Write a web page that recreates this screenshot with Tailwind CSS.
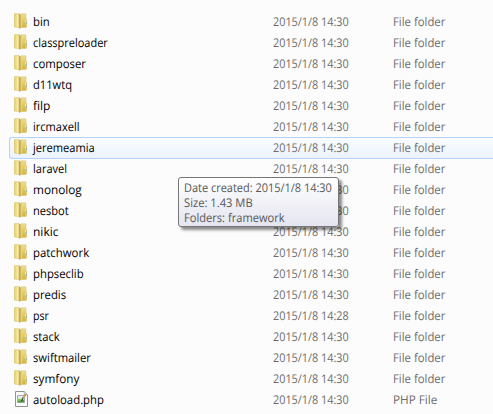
<!DOCTYPE html>
<html lang="en">
<head>
<meta charset="utf-8">
<title>vendor</title>
<script src="https://cdn.jsdelivr.net/npm/@tailwindcss/browser@4"></script>
</head>
<body class="bg-[#fcfcfc] w-[493px] h-[414px] overflow-hidden relative font-['Open_Sans','Noto_Sans',sans-serif] text-[12px] leading-[20px] text-[#6d6d6d] [text-rendering:geometricPrecision]">
<svg class="absolute w-0 h-0">
  <defs>
    <linearGradient id="cover" x1="0" x2="1" y1="0" y2="0"><stop offset="0" stop-color="#dfca6c"/><stop offset=".35" stop-color="#ecdc88"/><stop offset=".75" stop-color="#f6eca8"/><stop offset="1" stop-color="#e6d078"/></linearGradient>
    <linearGradient id="back" x1="0" x2="0" y1="0" y2="1"><stop offset="0" stop-color="#eedf92"/><stop offset=".4" stop-color="#e5cd6c"/><stop offset="1" stop-color="#d3b23f"/></linearGradient>
    <linearGradient id="spine" x1="0" x2="1" y1="0" y2="0"><stop offset="0" stop-color="#bfa24d"/><stop offset="1" stop-color="#dcc572"/></linearGradient>
    <symbol id="folder" viewBox="0 0 16 16">
      <path d="M7 .8h5v13.7H7z" fill="url(#back)" stroke="#dbc468" stroke-width=".5"/>
      <path d="M11 6h1.8v8.3H11z" fill="#dac263"/>
      <path d="M11.2 6.6h.8v3h-.8z" fill="#f7eebb"/>
      <path d="M12 8.7h.8v2.2H12z" fill="#79b3c0"/>
      <path d="M.2 1L1 .4h4.2v14.3L.2 14z" fill="url(#cover)" stroke="#d6c068" stroke-width=".5"/>
      <path d="M5 .8l2.6.9v13L5 15.8z" fill="url(#spine)"/>
      <path d="M7.5 1.8h.6v12.3l-.6.4z" fill="#eedf96"/>
    </symbol>
    <symbol id="file" viewBox="0 0 16 16">
      <path d="M1.5.5h8.7l3.3 3.3v11.7h-12z" fill="#fbfbfb" stroke="#929292"/>
      <path d="M10.2.7v3.1h3.1" fill="#e4e4e4" stroke="#a8a8a8" stroke-width=".8"/>
      <path d="M3.5 4.5h7v7h-7z" fill="#e3edf0" stroke="#8c979b" stroke-width=".8"/>
      <path d="M4 8.7h6v2.5H4z" fill="#5b963d"/>
      <path d="M4 7.8h3v2H4z" fill="#8fca53"/>
      <path d="M7.2 10.2l2.2-4" stroke="#3c4631" stroke-width="1.3"/>
      <path d="M9.2 6.6l2-2.4" stroke="#e0a02e" stroke-width="1.6"/>
      <path d="M11 4.4l.8-.9" stroke="#c9452f" stroke-width="1.4"/>
    </symbol>
  </defs>
</svg>
<main id="list" class="pt-[11px] pl-[9px]"></main>
<div class="absolute left-[178px] top-[177px] w-[161px] h-[50px] rounded-[3px] border border-[#767676] bg-linear-to-b from-white to-[#e4e5f0] shadow-[3px_3px_3px_rgba(0,0,0,0.45)] pl-[5px] pt-[2px] leading-[15px] text-[#575757]">
  <div class="h-[15px]"><span data-w="148" class="inline-block origin-left whitespace-pre">Date created: 2015/1/8 14:30</span></div>
  <div class="h-[15px]"><span data-w="69" class="inline-block origin-left whitespace-pre">Size: 1.43 MB</span></div>
  <div class="h-[15px]"><span data-w="101" class="inline-block origin-left whitespace-pre">Folders: framework</span></div>
</div>
<script>
  const rows = [
    ['bin', 17], ['classpreloader', 75], ['composer', 53], ['d11wtq', 39], ['filp', 17],
    ['ircmaxell', 47], ['jeremeamia', 62], ['laravel', 34], ['monolog', 49], ['nesbot', 36],
    ['nikic', 25], ['patchwork', 56], ['phpseclib', 51], ['predis', 33], ['psr', 16],
    ['stack', 27], ['swiftmailer', 58], ['symfony', 46], ['autoload.php', 71]
  ];
  document.getElementById('list').innerHTML = rows.map(([name, w], i) => {
    const php = name.endsWith('.php');
    const state = i === 6
      ? 'border-[#b3d3f9] bg-linear-to-b from-[#fafcfe] to-[#ebf3fd]'
      : 'border-transparent';
    return `<div class="flex h-[21px] ${i === 6 ? 'relative' : ''}">
      <div class="flex w-full h-[22px] shrink-0 border border-r-0 rounded-l-[3px] ${state}">
        <svg class="w-4 h-4 ml-1 mt-[1px] shrink-0"><use href="#${php ? 'file' : 'folder'}"/></svg>
        <div class="w-[243px] pl-[3px] shrink-0 text-black"><span data-w="${w}" class="inline-block origin-left whitespace-pre">${name}</span></div>
        <div class="w-[120px] shrink-0"><span data-w="76" class="inline-block origin-left whitespace-pre">2015/1/8 14:${name === 'psr' ? '28' : '30'}</span></div>
        <div class="shrink-0"><span data-w="${php ? 44 : 52}" class="inline-block origin-left whitespace-pre">${php ? 'PHP File' : 'File folder'}</span></div>
      </div></div>`;
  }).join('');
  // Condense each label to the width it should occupy, once styles and fonts have settled.
  const fit = () => document.querySelectorAll('[data-w]').forEach(el => {
    el.style.transform = `scaleX(${el.dataset.w / el.offsetWidth})`;
  });
  addEventListener('load', () => { fit(); document.fonts.ready.then(fit); setTimeout(fit, 60); });
</script>
</body>
</html>
